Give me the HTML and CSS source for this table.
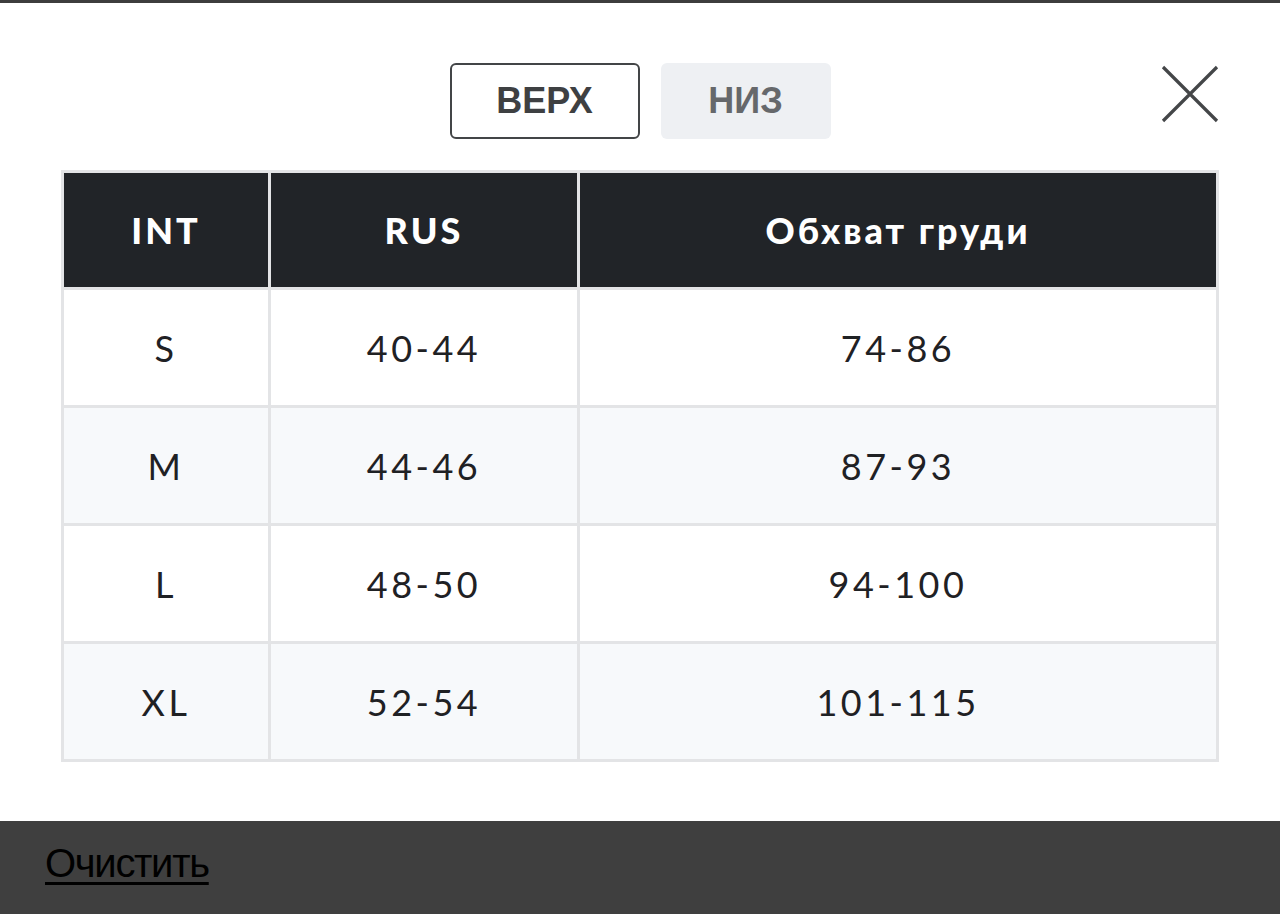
FILE: index.html
```html
<!DOCTYPE html>
<html lang="ru">
<head>
<meta charset="utf-8">
<title>Таблица размеров</title>
<link rel="stylesheet" href="styles.css">
</head>
<body>
<div class="topbar"></div>
<div class="modal">
  <div class="tabs">
    <button class="tab tab-active">ВЕРХ</button>
    <button class="tab tab-muted">НИЗ</button>
  </div>
  <button class="close" aria-label="Закрыть">
    <svg width="58" height="58" viewBox="0 0 58 58"><path d="M2 2 L56 56 M56 2 L2 56" stroke="#444648" stroke-width="3.2" fill="none"/></svg>
  </button>
  <table class="sizes">
    <thead>
      <tr><th class="c1">INT</th><th class="c2">RUS</th><th class="c3">Обхват груди</th></tr>
    </thead>
    <tbody>
      <tr><td>S</td><td>40-44</td><td>74-86</td></tr>
      <tr><td>M</td><td>44-46</td><td>87-93</td></tr>
      <tr><td>L</td><td>48-50</td><td>94-100</td></tr>
      <tr><td>XL</td><td>52-54</td><td>101-115</td></tr>
    </tbody>
  </table>
</div>
<div class="footer">
  <a class="clear" href="#">Очистить</a>
</div>
</body>
</html>
```
FILE: styles.css
```css
html, body {
  margin: 0;
  padding: 0;
  background: #ffffff;
}
body {
  width: 1280px;
  height: 914px;
  overflow: hidden;
  font-family: "Lato", "Noto Sans", sans-serif;
}
.topbar {
  height: 3px;
  background: #3d3d3d;
}
.modal {
  position: relative;
  height: 818px;
  padding: 60px 0 0 61px;
  box-sizing: border-box;
}
.tabs {
  display: flex;
  justify-content: center;
  gap: 21px;
  width: 1158px;
}
.tab {
  height: 76px;
  border-radius: 6px;
  font-family: "Liberation Sans", Arial, sans-serif;
  font-weight: 700;
  font-size: 36px;
  cursor: pointer;
}
.tab-active {
  width: 190px;
  background: #ffffff;
  border: 2.5px solid #434547;
  color: #3e4042;
}
.tab-muted {
  width: 170px;
  background: #eef0f3;
  border: none;
  color: #66686b;
}
.close {
  position: absolute;
  top: 62px;
  left: 1161px;
  padding: 0;
  border: none;
  background: none;
  width: 58px;
  height: 58px;
  cursor: pointer;
}
.close svg { display: block; }
.sizes {
  margin-top: 31px;
  width: 1158px;
  border-collapse: collapse;
  border: 3px solid #e3e4e6;
  table-layout: fixed;
}
.sizes th, .sizes td {
  border: 3px solid #e3e4e6;
  text-align: center;
  padding: 0;
  height: 115px;
  font-size: 36px;
  letter-spacing: 3.5px;
}
.sizes th {
  height: 114px;
  background: #212428;
  color: #ffffff;
  font-weight: 900;
  letter-spacing: 3px;
}
.sizes td {
  color: #1f2124;
  font-weight: 400;
}
.c1 { width: 204px; }
.c2 { width: 306px; }
.sizes tbody tr:nth-child(even) td {
  background: #f7f9fb;
}
.footer {
  height: 93px;
  background: #3f3f3f;
  padding: 20px 0 0 45px;
  box-sizing: border-box;
}
.clear {
  font-family: "Liberation Sans", Arial, sans-serif;
  font-size: 40px;
  font-weight: 400;
  color: #000000;
  text-decoration: underline;
  text-decoration-thickness: 3px;
  text-underline-offset: 5px;
  letter-spacing: -1.3px;
}
```
